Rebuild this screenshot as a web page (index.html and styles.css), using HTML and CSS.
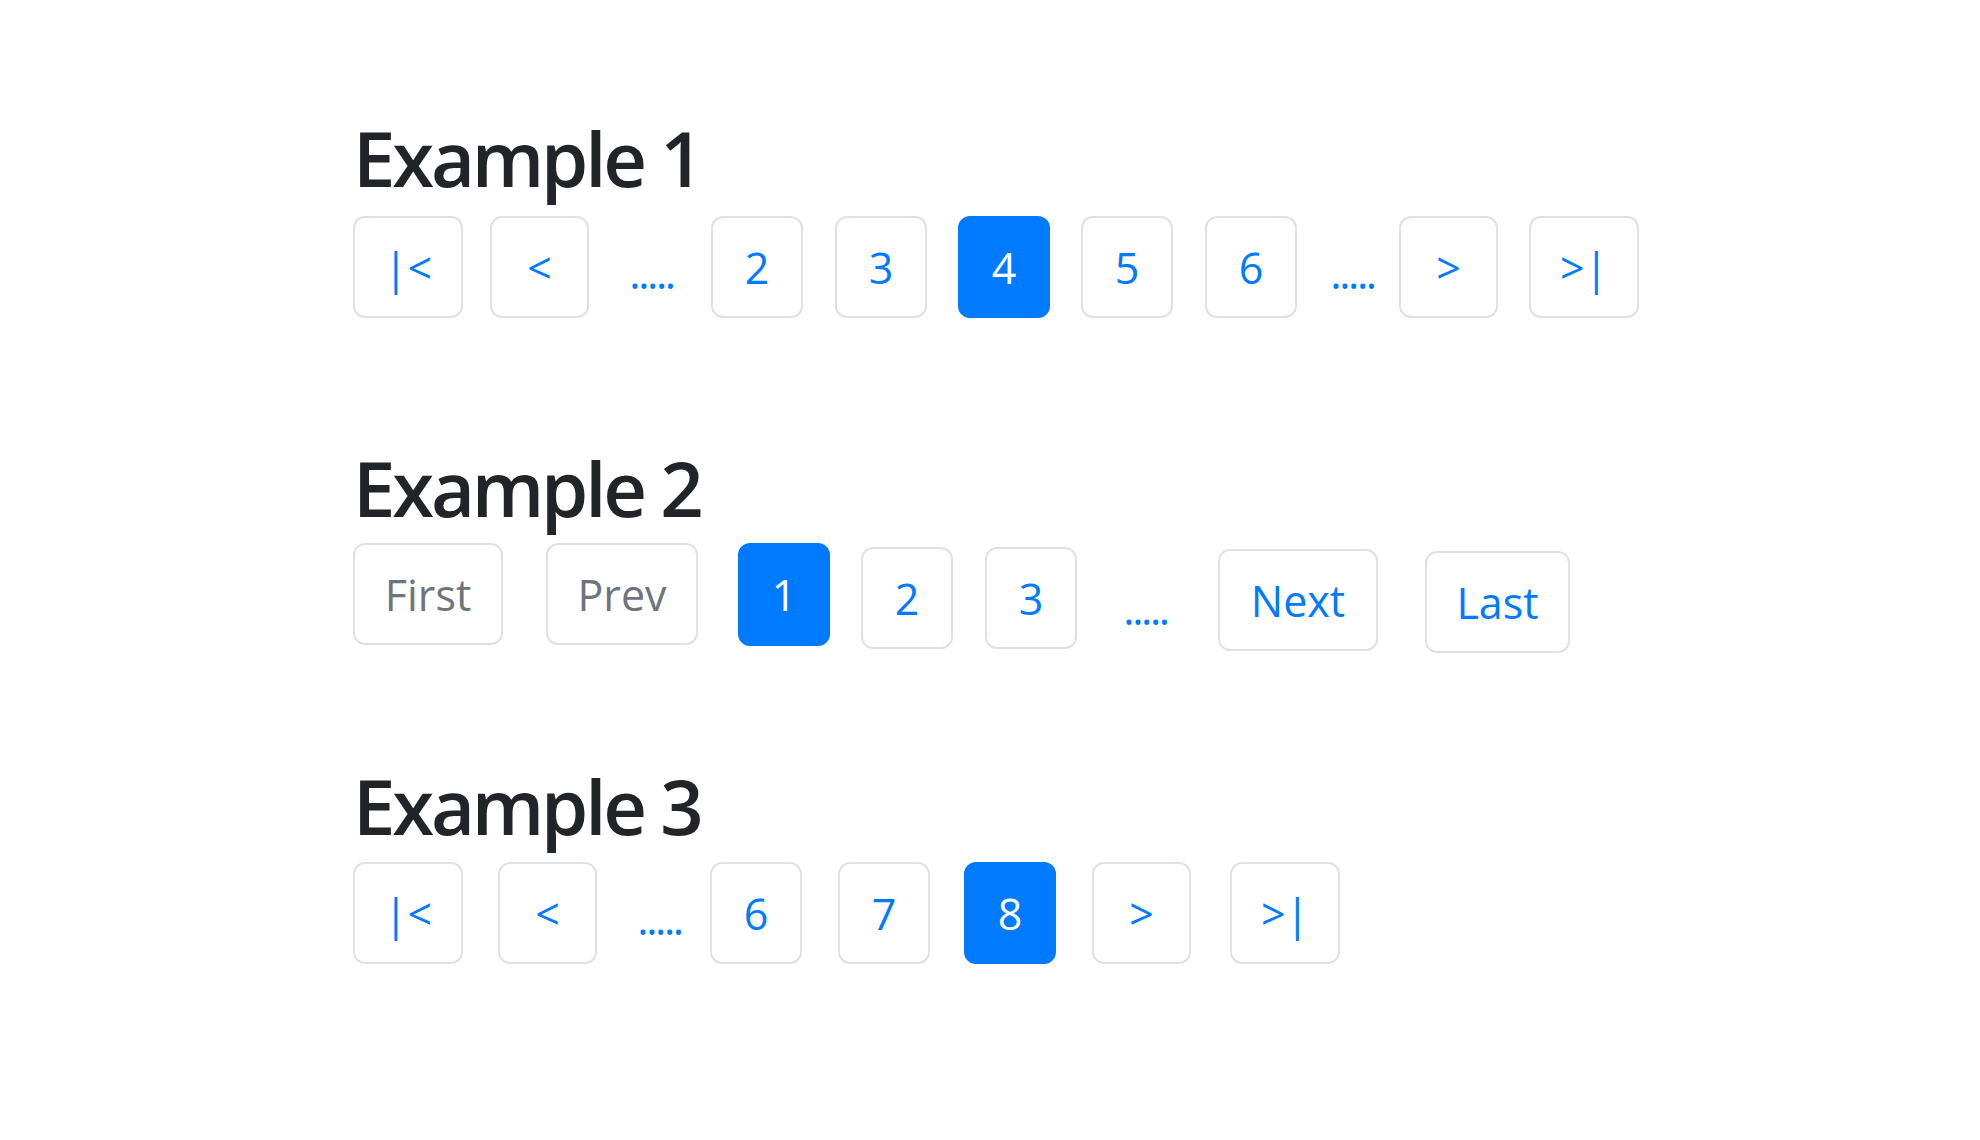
FILE: index.html
```html
<!DOCTYPE html>
<html lang="en">
<head>
<meta charset="utf-8">
<title>Pagination examples</title>
<link rel="stylesheet" href="styles.css">
</head>
<body>
<main class="page">
  <section class="example ex1">
    <h1 class="title">Example 1</h1>
    <nav class="pager">
      <a class="pg w-edge">|&lt;</a>
      <a class="pg w-arrow ml-27">&lt;</a>
      <span class="dots ml-41">.....</span>
      <a class="pg w-num ml-38">2</a>
      <a class="pg w-num ml-32">3</a>
      <a class="pg w-num active ml-31">4</a>
      <a class="pg w-num ml-31">5</a>
      <a class="pg w-num ml-32">6</a>
      <span class="dots ml-34">.....</span>
      <a class="pg w-arrow ml-25">&gt;</a>
      <a class="pg w-edge ml-31">&gt;|</a>
    </nav>
  </section>

  <section class="example ex2">
    <h1 class="title">Example 2</h1>
    <nav class="pager pager-top">
      <a class="pg w-first disabled">First</a>
      <a class="pg w-prev disabled ml-43">Prev</a>
      <a class="pg w-num active tall ml-40">1</a>
      <a class="pg w-num ml-31 dn-4">2</a>
      <a class="pg w-num ml-32 dn-4">3</a>
      <span class="dots ml-47 dn-4">.....</span>
      <a class="pg w-next ml-51 dn-6">Next</a>
      <a class="pg w-last ml-47 dn-8">Last</a>
    </nav>
  </section>

  <section class="example ex3">
    <h1 class="title">Example 3</h1>
    <nav class="pager">
      <a class="pg w-edge">|&lt;</a>
      <a class="pg w-arrow ml-35">&lt;</a>
      <span class="dots ml-41">.....</span>
      <a class="pg w-num ml-29">6</a>
      <a class="pg w-num ml-36">7</a>
      <a class="pg w-num active ml-34">8</a>
      <a class="pg w-arrow ml-36">&gt;</a>
      <a class="pg w-edge ml-39">&gt;|</a>
    </nav>
  </section>
</main>
</body>
</html>
```

FILE: styles.css
```css
html, body {
  margin: 0;
  padding: 0;
  background: #ffffff;
}

body {
  font-family: "Open Sans", "Noto Sans", "Liberation Sans", sans-serif;
  color: #212529;
}

.page {
  padding: 111px 0 0 353px;
}

.title {
  margin: 0;
  font-size: 76px;
  line-height: 94px;
  font-weight: 600;
  letter-spacing: -3.2px;
  color: #212529;
}

.ex2 { margin-top: 123px; }
.ex3 { margin-top: 100px; }

.ex1 .pager { margin-top: 11px; }
.ex2 .pager { margin-top: 8px; }
.ex3 .pager { margin-top: 9px; }

.pager {
  display: flex;
  align-items: center;
}

.pager-top {
  align-items: flex-start;
}

.pg {
  box-sizing: border-box;
  height: 102px;
  display: flex;
  align-items: center;
  justify-content: center;
  border: 2px solid #dee2e6;
  border-radius: 12px;
  background: #ffffff;
  color: #007bff;
  font-size: 43px;
  line-height: 1;
  text-decoration: none;
  white-space: nowrap;
}

.pg.active {
  background: #007bff;
  border-color: #007bff;
  color: #ffffff;
}

.pg.tall { height: 103px; }

.pg.disabled {
  color: #6c757d;
}

.dots {
  width: 43px;
  display: flex;
  justify-content: center;
  color: #007bff;
  font-size: 43px;
  letter-spacing: -2.4px;
  line-height: 1;
  padding-top: 10px;
}

.pager-top .dots {
  height: 102px;
  align-items: center;
}

.w-edge { width: 110px; }
.w-arrow { width: 99px; }
.w-num { width: 92px; }
.w-first { width: 150px; }
.w-prev { width: 152px; }
.w-next { width: 160px; }
.w-last { width: 145px; }

.ml-25 { margin-left: 25px; }
.ml-27 { margin-left: 27px; }
.ml-29 { margin-left: 29px; }
.ml-31 { margin-left: 31px; }
.ml-32 { margin-left: 32px; }
.ml-34 { margin-left: 34px; }
.ml-35 { margin-left: 35px; }
.ml-36 { margin-left: 36px; }
.ml-38 { margin-left: 38px; }
.ml-39 { margin-left: 39px; }
.ml-40 { margin-left: 40px; }
.ml-41 { margin-left: 41px; }
.ml-43 { margin-left: 43px; }
.ml-47 { margin-left: 47px; }
.ml-51 { margin-left: 51px; }

.dn-4 { margin-top: 4px; }
.dn-6 { margin-top: 6px; }
.dn-8 { margin-top: 8px; }
```
